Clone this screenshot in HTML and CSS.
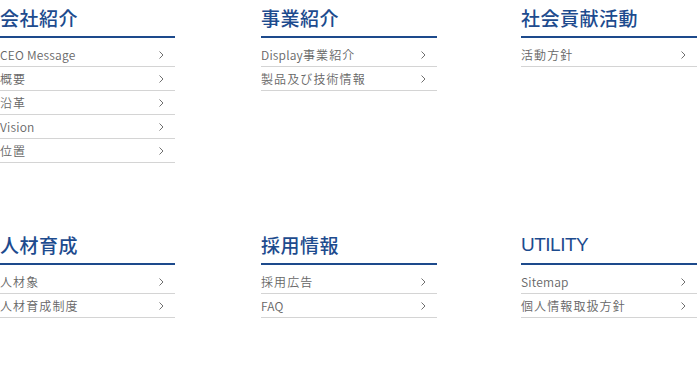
FILE: index.html
```html
<!DOCTYPE html>
<html lang="ja">
<head>
<meta charset="utf-8">
<title>Sitemap</title>
<link rel="stylesheet" href="styles.css">
</head>
<body>
<div class="sitemap">
  <section class="col col-1">
    <h2 class="head">会社紹介</h2>
    <ul class="list">
      <li class="item"><span class="lat">CEO Message</span><svg class="chev" width="5" height="8" viewBox="0 0 5 8"><polyline points="0.5,0.5 4,4 0.5,7.5"/></svg></li>
      <li class="item"><span>概要</span><svg class="chev" width="5" height="8" viewBox="0 0 5 8"><polyline points="0.5,0.5 4,4 0.5,7.5"/></svg></li>
      <li class="item"><span>沿革</span><svg class="chev" width="5" height="8" viewBox="0 0 5 8"><polyline points="0.5,0.5 4,4 0.5,7.5"/></svg></li>
      <li class="item"><span class="lat">Vision</span><svg class="chev" width="5" height="8" viewBox="0 0 5 8"><polyline points="0.5,0.5 4,4 0.5,7.5"/></svg></li>
      <li class="item"><span>位置</span><svg class="chev" width="5" height="8" viewBox="0 0 5 8"><polyline points="0.5,0.5 4,4 0.5,7.5"/></svg></li>
    </ul>
  </section>
  <section class="col col-2">
    <h2 class="head">事業紹介</h2>
    <ul class="list">
      <li class="item"><span><span class="lat">Display</span>事業紹介</span><svg class="chev" width="5" height="8" viewBox="0 0 5 8"><polyline points="0.5,0.5 4,4 0.5,7.5"/></svg></li>
      <li class="item"><span>製品及び技術情報</span><svg class="chev" width="5" height="8" viewBox="0 0 5 8"><polyline points="0.5,0.5 4,4 0.5,7.5"/></svg></li>
    </ul>
  </section>
  <section class="col col-3">
    <h2 class="head">社会貢献活動</h2>
    <ul class="list">
      <li class="item"><span>活動方針</span><svg class="chev" width="5" height="8" viewBox="0 0 5 8"><polyline points="0.5,0.5 4,4 0.5,7.5"/></svg></li>
    </ul>
  </section>
  <section class="col col-1">
    <h2 class="head">人材育成</h2>
    <ul class="list">
      <li class="item"><span>人材象</span><svg class="chev" width="5" height="8" viewBox="0 0 5 8"><polyline points="0.5,0.5 4,4 0.5,7.5"/></svg></li>
      <li class="item"><span>人材育成制度</span><svg class="chev" width="5" height="8" viewBox="0 0 5 8"><polyline points="0.5,0.5 4,4 0.5,7.5"/></svg></li>
    </ul>
  </section>
  <section class="col col-2">
    <h2 class="head">採用情報</h2>
    <ul class="list">
      <li class="item"><span>採用広告</span><svg class="chev" width="5" height="8" viewBox="0 0 5 8"><polyline points="0.5,0.5 4,4 0.5,7.5"/></svg></li>
      <li class="item"><span class="lat">FAQ</span><svg class="chev" width="5" height="8" viewBox="0 0 5 8"><polyline points="0.5,0.5 4,4 0.5,7.5"/></svg></li>
    </ul>
  </section>
  <section class="col col-3">
    <h2 class="head head-latin">UTILITY</h2>
    <ul class="list">
      <li class="item"><span class="lat">Sitemap</span><svg class="chev" width="5" height="8" viewBox="0 0 5 8"><polyline points="0.5,0.5 4,4 0.5,7.5"/></svg></li>
      <li class="item"><span>個人情報取扱方針</span><svg class="chev" width="5" height="8" viewBox="0 0 5 8"><polyline points="0.5,0.5 4,4 0.5,7.5"/></svg></li>
    </ul>
  </section>
</div>
</body>
</html>
```
FILE: styles.css
```css
html, body {
  margin: 0;
  padding: 0;
  background: #ffffff;
}
body {
  font-family: "Noto Sans CJK JP", "Noto Sans", sans-serif;
}
.sitemap {
  display: grid;
  grid-template-columns: 261px 260px 176px;
  row-gap: 64px;
  align-items: start;
}
.col-1 { width: 175px; }
.col-2 { width: 176px; }
.col-3 { width: 176px; }
.head {
  margin: 0;
  height: 36px;
  line-height: 35px;
  font-size: 19px;
  font-weight: 500;
  letter-spacing: 0.5px;
  color: #1d4b8e;
  border-bottom: 2px solid #1d4a8c;
  box-sizing: content-box;
}
.head-latin {
  font-family: "Liberation Sans", sans-serif;
  font-weight: 400;
  letter-spacing: -0.5px;
}
.list {
  list-style: none;
  margin: 0;
  padding: 5px 0 0 0;
}
.item {
  display: flex;
  align-items: center;
  justify-content: space-between;
  height: 23px;
  line-height: 23px;
  border-bottom: 1px solid #d4d4d4;
  padding-right: 11px;
  font-size: 12px;
  font-weight: 350;
  letter-spacing: 1.1px;
  color: #666666;
}
.lat {
  letter-spacing: 0.2px;
}
.chev {
  fill: none;
  stroke: #707070;
  stroke-width: 1;
}
```
